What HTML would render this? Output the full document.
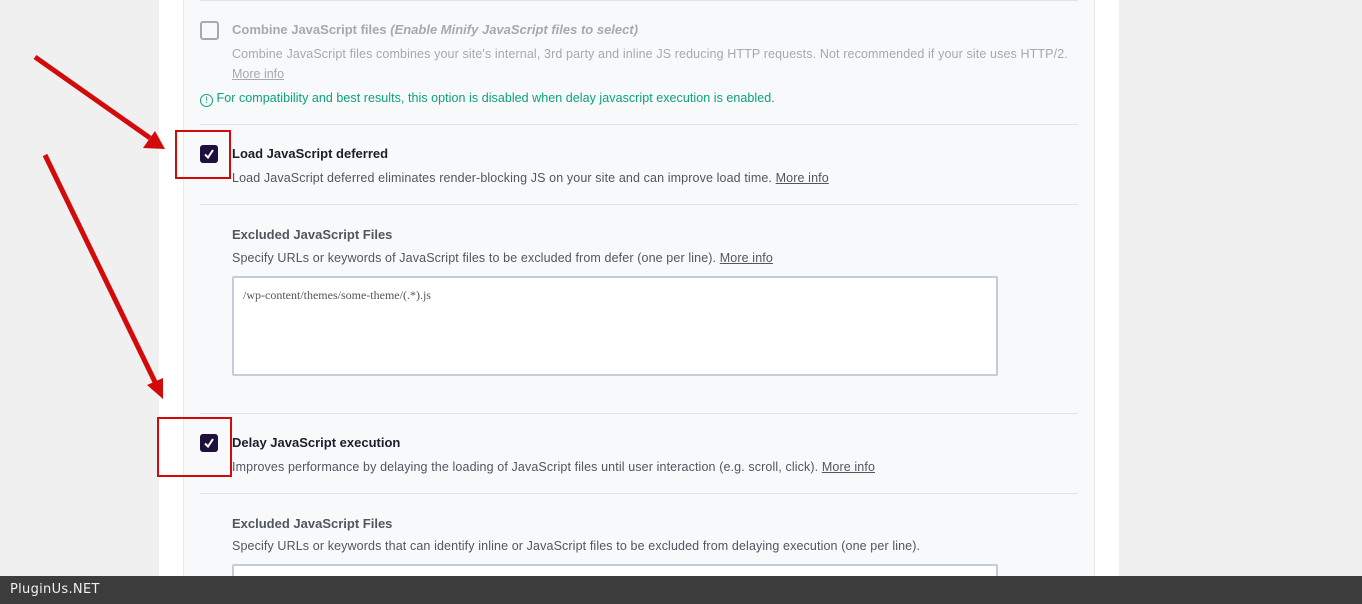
<!DOCTYPE html>
<html><head><style>
body{margin:0;width:1362px;height:604px;background:#f0f0f1;position:relative;overflow:hidden;font-family:"Liberation Sans",sans-serif;}
.panel{position:absolute;left:159px;top:0;width:960px;height:604px;background:#fff;}
.inner{position:absolute;left:183px;top:0;width:910px;height:604px;background:#f8f9fb;border-left:1px solid #e6e8ec;border-right:1px solid #e6e8ec;}
.sep{position:absolute;left:200px;width:878px;height:1px;background:#e2e4e8;}
.t{position:absolute;font-size:13px;white-space:nowrap;}
.title{font-weight:bold;color:#1d1d2b;}
.desc{color:#50575e;font-size:12.5px;letter-spacing:0.12px;}
.gray{color:#a6a9ad;}
a{color:#50575e;text-decoration:underline;}
.cb{position:absolute;width:18px;height:18px;border-radius:3px;background:#1e0f3c;}
.cb svg{position:absolute;left:3px;top:3px;}
.ta{position:absolute;left:232px;width:762px;background:#fff;border:2px solid #c5ccd6;border-radius:2px;}
.red{position:absolute;border:2px solid #d20a0a;}
.foot{position:absolute;left:0;top:576px;width:1362px;height:28px;background:#3c3c3c;color:#f0f0f0;font-size:13px;line-height:28px;padding-left:10px;box-sizing:border-box;font-family:"DejaVu Sans",sans-serif;letter-spacing:0.3px;}
</style></head><body>
<div class="panel"></div>
<div class="inner"></div>
<div class="sep" style="top:0"></div>
<div style="position:absolute;left:200px;top:21px;width:15px;height:15px;border:2px solid #a6a9ad;border-radius:3px;"></div>
<div class="t gray" style="left:232px;top:22px;font-weight:bold;">Combine JavaScript files <i>(Enable Minify JavaScript files to select)</i></div>
<div class="t gray" style="left:232px;top:47px;font-size:12.5px;letter-spacing:0.12px;">Combine JavaScript files combines your site's internal, 3rd party and inline JS reducing HTTP requests. Not recommended if your site uses HTTP/2.</div>
<div class="t gray" style="left:232px;top:67px;font-size:12.5px;text-decoration:underline;">More info</div>
<div class="t" style="left:200px;top:91px;color:#0aa37a;font-size:12.5px;letter-spacing:0.05px;"><span style="display:inline-block;width:11px;height:11px;border:1px solid #0aa37a;border-radius:50%;font-size:9px;line-height:11px;text-align:center;vertical-align:-1px;">!</span> For compatibility and best results, this option is disabled when delay javascript execution is enabled.</div>
<div class="sep" style="top:124px"></div>
<div class="cb" style="left:200px;top:145px"><svg width="12" height="12" viewBox="0 0 12 12"><path d="M2 6.5 L5 9.5 L10 2" stroke="#fff" stroke-width="2" fill="none"/></svg></div>
<div class="t title" style="left:232px;top:146px;">Load JavaScript deferred</div>
<div class="t desc" style="left:232px;top:171px;">Load JavaScript deferred eliminates render-blocking JS on your site and can improve load time. <a>More info</a></div>
<div class="sep" style="top:204px"></div>
<div class="t" style="left:232px;top:227px;font-weight:bold;color:#50575e;">Excluded JavaScript Files</div>
<div class="t desc" style="left:232px;top:251px;">Specify URLs or keywords of JavaScript files to be excluded from defer (one per line). <a>More info</a></div>
<div class="ta" style="top:276px;height:96px;"><div style="font-family:'Liberation Serif',serif;font-size:12px;color:#50575e;padding:10px 9px;">/wp-content/themes/some-theme/(.*).js</div></div>
<div class="sep" style="top:413px"></div>
<div class="cb" style="left:200px;top:434px"><svg width="12" height="12" viewBox="0 0 12 12"><path d="M2 6.5 L5 9.5 L10 2" stroke="#fff" stroke-width="2" fill="none"/></svg></div>
<div class="t title" style="left:232px;top:435px;">Delay JavaScript execution</div>
<div class="t desc" style="left:232px;top:460px;">Improves performance by delaying the loading of JavaScript files until user interaction (e.g. scroll, click). <a>More info</a></div>
<div class="sep" style="top:493px"></div>
<div class="t" style="left:232px;top:516px;font-weight:bold;color:#50575e;">Excluded JavaScript Files</div>
<div class="t desc" style="left:232px;top:539px;">Specify URLs or keywords that can identify inline or JavaScript files to be excluded from delaying execution (one per line).</div>
<div class="ta" style="top:564px;height:30px;"></div>
<div class="red" style="left:175px;top:130px;width:52px;height:45px;"></div>
<div class="red" style="left:157px;top:417px;width:71px;height:56px;"></div>
<svg style="position:absolute;left:0;top:0" width="200" height="420">
<line x1="35" y1="57" x2="150" y2="138" stroke="#d20a0a" stroke-width="5"/>
<polygon points="165,149 143,148 155,131" fill="#d20a0a"/>
<line x1="45" y1="155" x2="155" y2="382" stroke="#d20a0a" stroke-width="5"/>
<polygon points="163,399 147,385 163,378" fill="#d20a0a"/>
</svg>
<div class="foot">PluginUs.NET</div>
</body></html>
